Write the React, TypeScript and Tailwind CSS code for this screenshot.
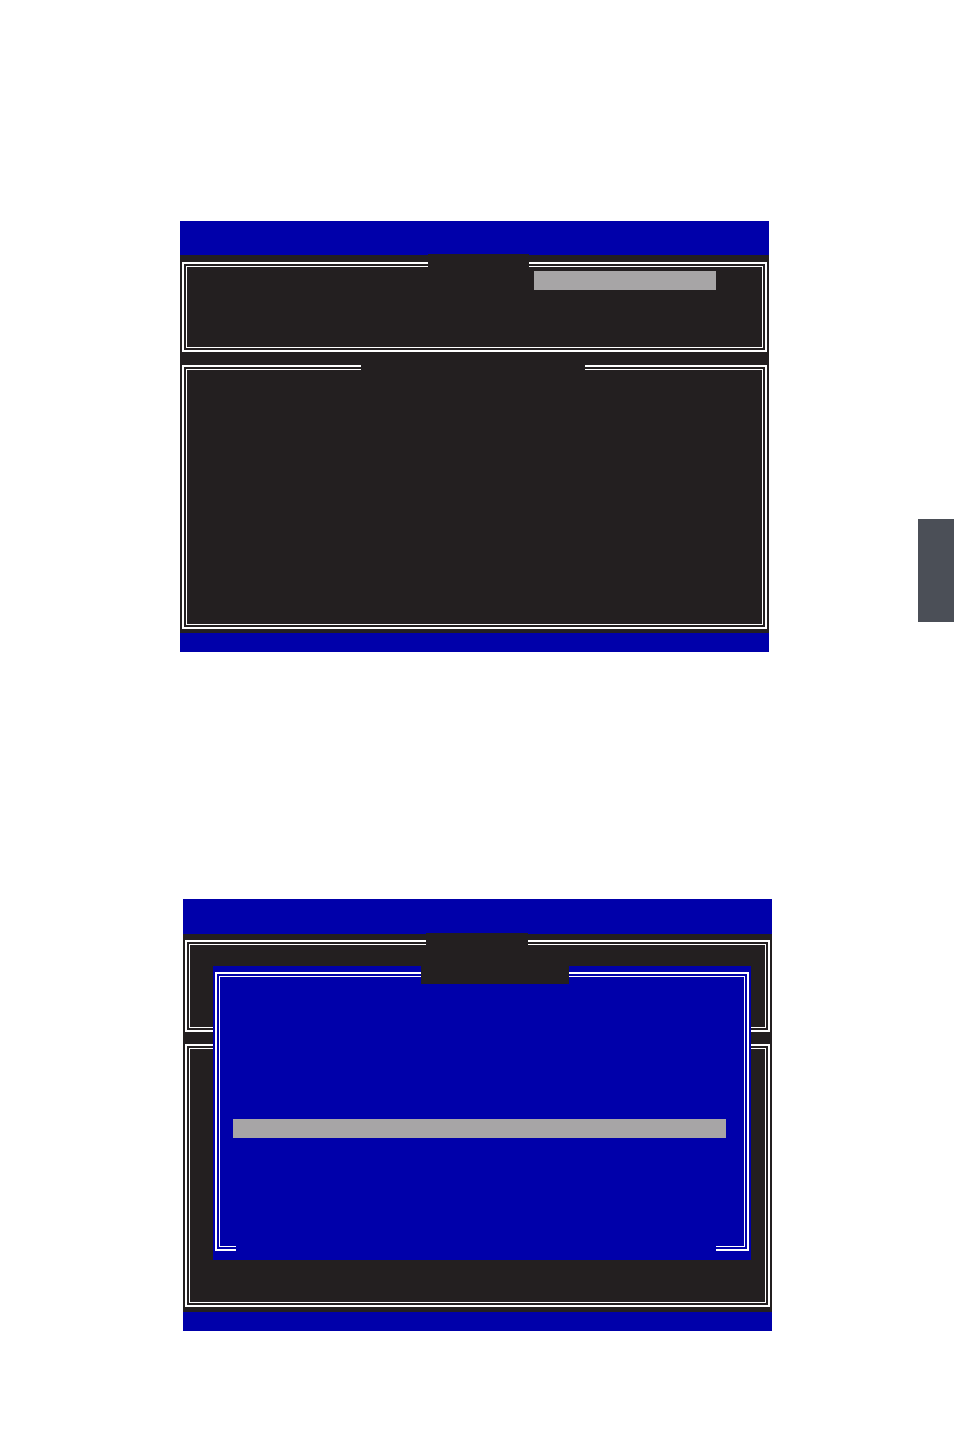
import React from "react";

const BLUE = "bg-[#0000aa]";

// A double-lined box, the kind BIOS setup screens draw with box characters.
function Frame({
  className = "",
  children,
}: {
  className?: string;
  children?: React.ReactNode;
}) {
  return (
    <div className={`border-2 border-white p-[2px] ${className}`}>
      <div className="border border-white h-full">{children}</div>
    </div>
  );
}

function RaidStatusScreen() {
  return (
    <div className="w-[589px] h-[431px] bg-[#231f20] flex flex-col ml-[180px]">
      <div className={`h-[34px] ${BLUE}`} />
      <div className="px-[2px] pt-[7px] flex flex-col">
        {/* Main menu panel */}
        <div className="relative h-[90px]">
          <Frame className="h-full">
            <div className="pl-[347px] pt-[4px]">
              <div className="w-[182px] h-[19px] bg-[#a7a5a6]" />
            </div>
          </Frame>
          <div className="absolute left-[246px] top-[-8px] w-[101px] h-[14px] bg-[#231f20]" />
        </div>
        {/* Disk / volume information panel */}
        <div className="relative h-[264px] mt-[13px]">
          <Frame className="h-full" />
          <div className="absolute left-[179px] top-[-1px] w-[224px] h-[7px] bg-[#231f20]" />
        </div>
      </div>
      <div className={`mt-auto h-[19px] ${BLUE}`} />
    </div>
  );
}

function CreateVolumeScreen() {
  return (
    <div className="relative w-[589px] h-[432px] bg-[#231f20] flex flex-col ml-[183px]">
      <div className={`h-[35px] ${BLUE}`} />
      <div className="px-[2px] pt-[6px] flex flex-col">
        <div className="relative h-[92px]">
          <Frame className="h-full" />
          <div className="absolute left-[241px] top-[-7px] w-[102px] h-[33px] bg-[#231f20]" />
        </div>
        <div className="relative h-[263px] mt-[12px]">
          <Frame className="h-full" />
        </div>
      </div>
      <div className={`mt-auto h-[19px] ${BLUE}`} />

      {/* Pop-up dialog over the menu */}
      <div className={`absolute left-[30px] top-[67px] w-[538px] h-[294px] ${BLUE} pt-[6px] px-[2px] pb-[9px]`}>
        <Frame className="h-full">
          <div className="pl-[13px] pt-[142px]">
            <div className="w-[493px] h-[19px] bg-[#a7a5a6]" />
          </div>
        </Frame>
        <div className="absolute left-[208px] top-0 w-[148px] h-[18px] bg-[#231f20]" />
        <div className={`absolute left-[23px] top-[279px] w-[480px] h-[7px] ${BLUE}`} />
      </div>
    </div>
  );
}

export default function App() {
  return (
    <div className="relative w-[954px] h-[1452px] bg-white overflow-hidden">
      <div className="flex flex-col pt-[221px]">
        <RaidStatusScreen />
        <div className="mt-[247px]">
          <CreateVolumeScreen />
        </div>
      </div>
      {/* Chapter thumb tab on the page edge */}
      <div className="absolute right-0 top-[519px] w-[36px] h-[103px] bg-[#4b4f57]" />
    </div>
  );
}
